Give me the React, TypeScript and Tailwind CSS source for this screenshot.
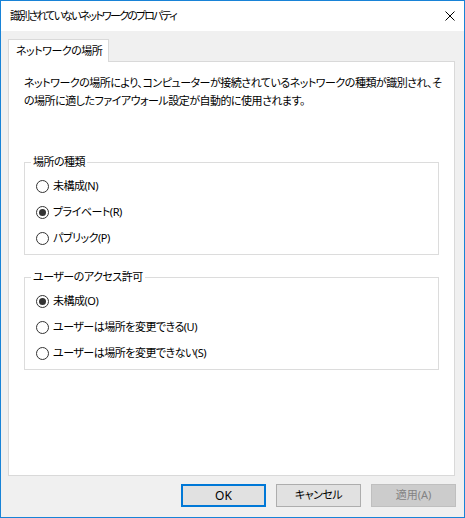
import { useState } from 'react';

const font = "font-['Noto_Sans','Noto_Sans_CJK_JP',sans-serif] [font-feature-settings:'palt']";
const label = 'text-[11px] leading-[18px] tracking-[-0.5px] text-black';

function Radio({ checked, text, onClick }: { checked: boolean; text: string; onClick: () => void }) {
  return (
    <button onClick={onClick} className="flex h-[26px] items-center pl-[11px] text-left">
      <span className="flex h-[13px] w-[13px] items-center justify-center rounded-full border border-[#333333] bg-white">
        {checked && <span className="h-[7px] w-[7px] rounded-full bg-[#333333]" />}
      </span>
      <span className={`ml-[4px] ${label}`}>{text}</span>
    </button>
  );
}

function Group({
  title,
  options,
  value,
  onChange,
  className,
}: {
  title: string;
  options: string[];
  value: number;
  onChange: (i: number) => void;
  className?: string;
}) {
  return (
    <fieldset className={`mx-[15px] border border-[#dcdcdc] px-0 ${className ?? ''}`}>
      <legend className={`ml-[6px] px-[2px] ${label}`}>{title}</legend>
      <div className="flex flex-col pt-[2px] pb-[3px]">
        {options.map((o, i) => (
          <Radio key={o} checked={value === i} text={o} onClick={() => onChange(i)} />
        ))}
      </div>
    </fieldset>
  );
}

export default function App() {
  const [location, setLocation] = useState(1);
  const [access, setAccess] = useState(0);

  return (
    <div className={`flex h-[518px] w-[465px] flex-col border border-[#1883d7] bg-[#f0f0f0] ${font}`}>
      {/* Title bar */}
      <div className="flex h-[30px] items-center justify-between bg-white pl-[9px] pr-[9px]">
        <span className="text-[11px] tracking-[-1.8px] whitespace-nowrap text-black">
          識別されていないネットワークのプロパティ
        </span>
        <svg width="10" height="10" viewBox="0 0 10 10">
          <path d="M0.5 0.5 L9.5 9.5 M9.5 0.5 L0.5 9.5" stroke="#000" strokeWidth="1" />
        </svg>
      </div>

      {/* Body */}
      <div className="flex flex-1 flex-col px-[7px] pt-[8px]">
        <div className="relative z-10 -mb-px flex h-[23px] w-[101px] items-center border border-b-0 border-[#d9d9d9] bg-white pl-[7px]">
          <span className={`whitespace-nowrap ${label}`}>ネットワークの場所</span>
        </div>
        <div className="flex h-[415px] w-[447px] flex-col border border-[#d9d9d9] bg-white pt-[12px]">
          <p className={`px-[15px] whitespace-nowrap ${label}`}>
            ネットワークの場所により、コンピューターが接続されているネットワークの種類が識別され、そ
            <br />
            の場所に適したファイアウォール設定が自動的に使用されます。
          </p>

          <Group
            title="場所の種類"
            options={['未構成(N)', 'プライベート(R)', 'パブリック(P)']}
            value={location}
            onChange={setLocation}
            className="mt-[43px]"
          />
          <Group
            title="ユーザーのアクセス許可"
            options={['未構成(O)', 'ユーザーは場所を変更できる(U)', 'ユーザーは場所を変更できない(S)']}
            value={access}
            onChange={setAccess}
            className="mt-[13px]"
          />
        </div>

        {/* Buttons */}
        <div className="mt-[8px] flex justify-end gap-[10px] pr-[1px]">
          <button className="h-[23px] w-[85px] border-2 border-[#0078d7] bg-[#e1e1e1] text-[12px] text-black">
            OK
          </button>
          <button className="h-[23px] w-[85px] border border-[#adadad] bg-[#e1e1e1] text-[11px] tracking-[-0.5px] text-black">
            キャンセル
          </button>
          <button disabled className="h-[23px] w-[85px] border border-[#bfbfbf] bg-[#cccccc] text-[11px] text-[#838383]">
            適用(A)
          </button>
        </div>
      </div>
    </div>
  );
}
